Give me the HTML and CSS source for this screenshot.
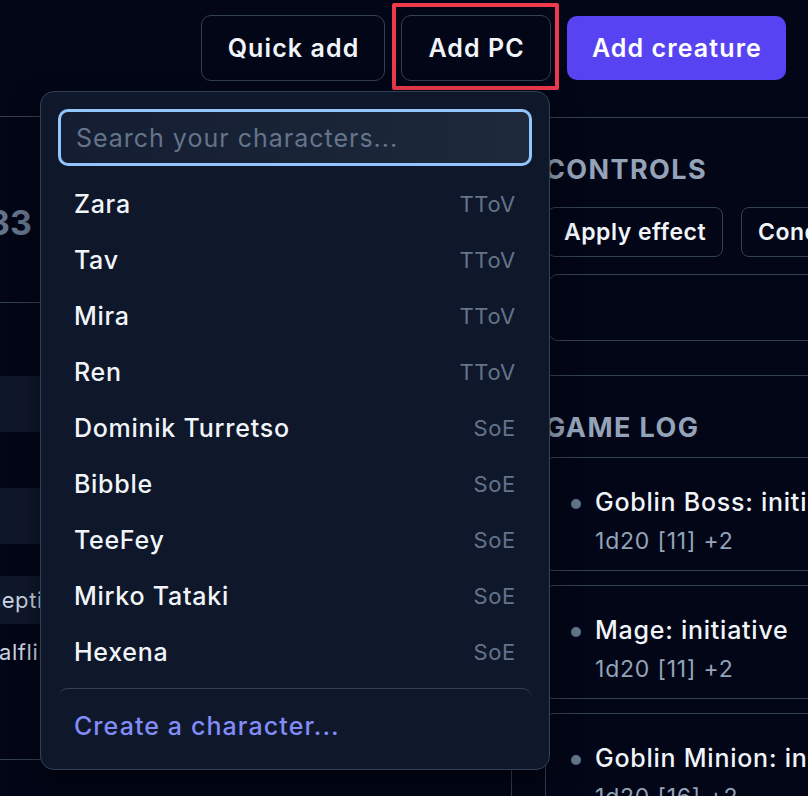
FILE: index.html
```html
<!DOCTYPE html>
<html lang="en">
<head>
<meta charset="utf-8">
<title>Encounter</title>
<link rel="stylesheet" href="styles.css">
</head>
<body>
  <header class="topbar">
    <button class="btn btn-outline">Quick add</button>
    <div class="pc-wrap">
      <button class="btn btn-outline">Add PC</button>
      <span class="highlight"></span>
      <div class="dropdown">
        <input class="search" type="text" placeholder="Search your characters...">
        <ul class="char-list">
          <li class="char"><span class="char-name">Zara</span><span class="char-tag">TToV</span></li>
          <li class="char"><span class="char-name">Tav</span><span class="char-tag">TToV</span></li>
          <li class="char"><span class="char-name">Mira</span><span class="char-tag">TToV</span></li>
          <li class="char"><span class="char-name">Ren</span><span class="char-tag">TToV</span></li>
          <li class="char"><span class="char-name">Dominik Turretso</span><span class="char-tag">SoE</span></li>
          <li class="char"><span class="char-name">Bibble</span><span class="char-tag">SoE</span></li>
          <li class="char"><span class="char-name">TeeFey</span><span class="char-tag">SoE</span></li>
          <li class="char"><span class="char-name">Mirko Tataki</span><span class="char-tag">SoE</span></li>
          <li class="char"><span class="char-name">Hexena</span><span class="char-tag">SoE</span></li>
        </ul>
        <div class="dd-footer"><span class="create">Create a character...</span></div>
      </div>
    </div>
    <button class="btn btn-primary">Add creature</button>
  </header>

  <main class="layout">
    <section class="tracker">
      <div class="tracker-head"><span class="round">33</span></div>
      <div class="trow trow-head"></div>
      <div class="trow trow-alt"></div>
      <div class="trow"></div>
      <div class="trow trow-alt"></div>
      <div class="trow trow-short"></div>
      <div class="trow trow-alt trow-skill"><span class="skill">Perception</span></div>
      <div class="trow trow-race"><span class="race">Halfling</span></div>
      <div class="trow trow-end"></div>
    </section>

    <aside class="side">
      <section class="panel controls">
        <h2 class="panel-title">Controls</h2>
        <div class="ctrl-buttons">
          <button class="btn-sm">Apply effect</button>
          <button class="btn-sm">Conditions</button>
        </div>
        <div class="ctrl-box"></div>
      </section>

      <section class="panel log">
        <h2 class="panel-title">Game log</h2>
        <ul class="log-list">
          <li class="log-entry">
            <div class="log-main"><span class="dot"></span>Goblin Boss: initiative</div>
            <div class="log-sub">1d20 [11] +2</div>
          </li>
          <li class="log-entry">
            <div class="log-main"><span class="dot"></span>Mage: initiative</div>
            <div class="log-sub">1d20 [11] +2</div>
          </li>
          <li class="log-entry">
            <div class="log-main"><span class="dot"></span>Goblin Minion: initiative</div>
            <div class="log-sub">1d20 [16] +2</div>
          </li>
        </ul>
      </section>
    </aside>
  </main>
</body>
</html>
```

FILE: styles.css
```css
html, body {
  margin: 0;
  padding: 0;
  height: 100%;
  overflow: hidden;
}

body {
  background: #020617;
  color: #f1f5f9;
  font-family: "Inter", "Noto Sans", sans-serif;
}

* { box-sizing: border-box; }

button { font-family: inherit; }

/* ---------- top bar ---------- */
.topbar {
  display: flex;
  justify-content: flex-end;
  align-items: center;
  gap: 16px;
  padding: 15px 22px 0 0;
  height: 81px;
}

.btn {
  height: 66px;
  border-radius: 10px;
  font-size: 25px;
  font-weight: 600;
  letter-spacing: 1.1px;
  color: #f1f5f9;
  cursor: pointer;
  white-space: nowrap;
}

.btn-outline {
  background: transparent;
  border: 1px solid #334155;
  padding: 0 25px 0 26px;
}

.btn-primary {
  height: 64px;
  background: #5843f2;
  border: none;
  padding: 0 24px 0 25px;
  color: #ffffff;
}

.pc-wrap {
  position: relative;
  z-index: 10;
}

.pc-wrap .btn { display: block; }

.highlight {
  position: absolute;
  top: -12px;
  left: -9px;
  right: -8px;
  bottom: -9px;
  border: 4px solid #ef3a4c;
  border-radius: 2px;
  pointer-events: none;
}

/* ---------- dropdown ---------- */
.dropdown {
  position: absolute;
  top: 76px;
  right: 1px;
  width: 510px;
  background: #0f172a;
  border: 1px solid #334155;
  border-radius: 14px;
  padding: 17px;
  box-shadow: 0 12px 30px rgba(0, 0, 0, 0.5);
}

.search {
  display: block;
  width: 100%;
  height: 57px;
  border: 3px solid #93c5fd;
  border-radius: 10px;
  background: linear-gradient(90deg, #141d31 0%, #1e293b 100%);
  padding: 0 15px;
  font-family: inherit;
  font-size: 25px;
  letter-spacing: 1px;
  color: #f1f5f9;
  outline: none;
}

.search::placeholder { color: #64748b; }

.char-list {
  list-style: none;
  margin: 10px 0 0;
  padding: 0;
}

.char {
  display: flex;
  justify-content: space-between;
  align-items: center;
  height: 56px;
  padding: 0 16px;
}

.char-name {
  font-size: 25px;
  font-weight: 500;
  letter-spacing: 0.75px;
  color: #f1f5f9;
}

.char-tag {
  font-size: 22px;
  letter-spacing: 0.6px;
  color: #64748b;
}

.dd-footer {
  margin-top: 8px;
  border-top: 1px solid #334155;
  border-radius: 10px;
  padding: 21px 16px 10px;
}

.create {
  display: block;
  line-height: 32px;
  font-size: 25px;
  font-weight: 500;
  letter-spacing: 1.1px;
  color: #818cf8;
}

/* ---------- main layout ---------- */
.layout {
  display: grid;
  grid-template-columns: 512px 400px;
  column-gap: 33px;
  margin-top: 35px;
  width: 945px;
}

/* left tracker */
.tracker {
  border-top: 1px solid #334155;
  border-right: 1px solid #334155;
  min-height: 700px;
}

.tracker-head {
  height: 186px;
  border-bottom: 1px solid #334155;
  padding-top: 86px;
}

.round {
  display: block;
  margin-left: -12px;
  font-size: 34px;
  line-height: 40px;
  font-weight: 700;
  color: #64748b;
}

.trow { height: 56px; }
.trow-head { height: 73px; }
.trow-alt { background: #0f172a; }
.trow-short { height: 32px; }
.trow-skill {
  height: 48px;
  display: flex;
  align-items: center;
}
.trow-race {
  height: 136px;
  border-bottom: 1px solid #334155;
  padding-top: 12px;
}
.trow-end { height: 40px; }

.skill, .race {
  display: block;
  font-size: 22px;
  line-height: 32px;
  letter-spacing: 0.6px;
  color: #cbd5e1;
  white-space: nowrap;
}
.skill { margin-left: -48px; }
.race { margin-left: -18px; }

/* right column */
.side {
  padding-top: 1px;
}

.panel {
  border-top: 1px solid #334155;
}

.panel-title {
  margin: 0;
  font-size: 27px;
  line-height: 32px;
  font-weight: 700;
  letter-spacing: 1.4px;
  text-transform: uppercase;
  color: #94a3b8;
}

.controls {
  padding-top: 36px;
}

.ctrl-buttons {
  display: flex;
  gap: 18px;
  margin-top: 21px;
  padding-left: 2px;
}

.btn-sm {
  height: 50px;
  padding: 0 16px;
  background: transparent;
  border: 1px solid #334155;
  border-radius: 8px;
  font-size: 23px;
  font-weight: 600;
  letter-spacing: 0.5px;
  color: #f1f5f9;
  white-space: nowrap;
}

.ctrl-box {
  margin-top: 17px;
  margin-left: 3px;
  height: 67px;
  border: 1px solid #334155;
  border-radius: 10px 0 0 10px;
}

.log {
  margin-top: 34px;
  padding-top: 36px;
}

.log-list {
  list-style: none;
  margin: 13px 0 0;
  padding: 0;
  display: flex;
  flex-direction: column;
  gap: 14px;
}

.log-entry {
  border: 1px solid #334155;
  border-radius: 8px;
  padding: 27px 20px 14px 25px;
  height: 114px;
}

.log-main {
  display: flex;
  align-items: center;
  gap: 14px;
  font-size: 25px;
  font-weight: 500;
  line-height: 34px;
  letter-spacing: 0.75px;
  color: #f1f5f9;
  white-space: nowrap;
}

.dot {
  width: 10px;
  height: 10px;
  border-radius: 50%;
  background: #64748b;
  flex: none;
  margin-top: 3px;
}

.log-sub {
  margin-top: 7px;
  padding-left: 24px;
  font-size: 23px;
  line-height: 30px;
  letter-spacing: 0.8px;
  color: #94a3b8;
}
```
